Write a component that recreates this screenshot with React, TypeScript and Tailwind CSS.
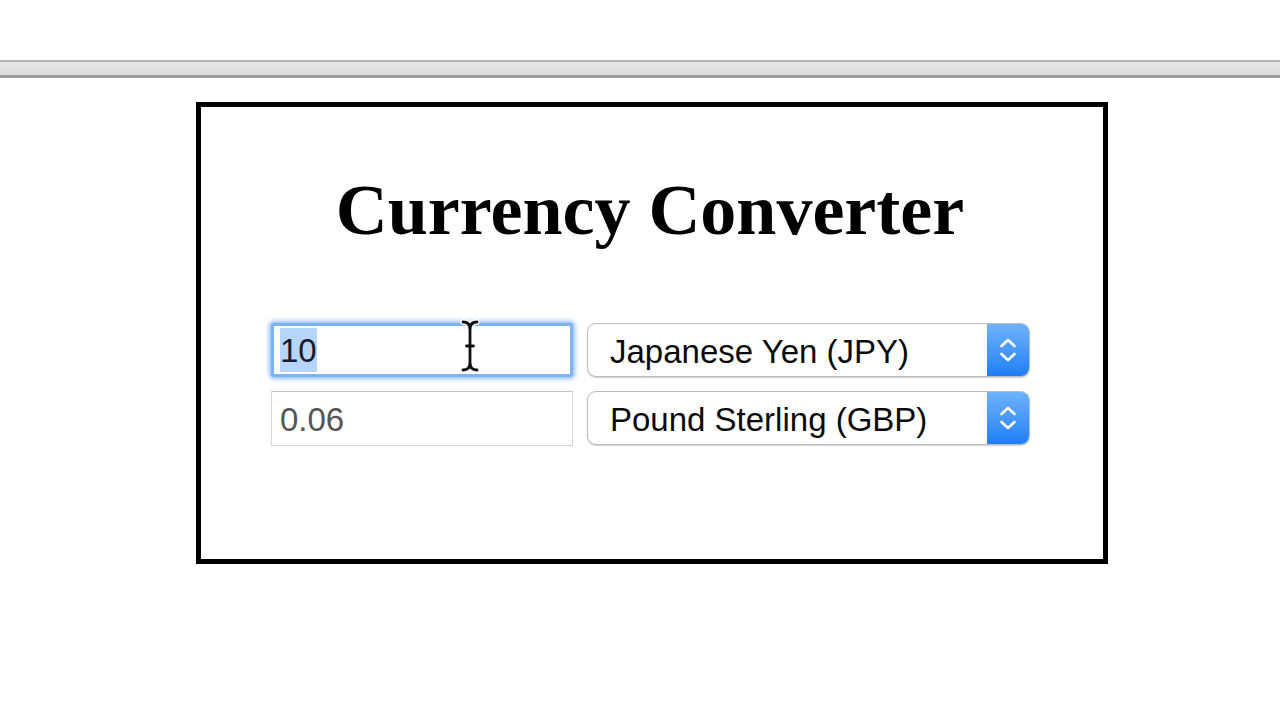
import React from "react";

function Chevrons() {
  return (
    <svg width="18" height="30" viewBox="0 0 18 30" fill="none">
      <path d="M2.5 11 L9 5 L15.5 11" stroke="white" strokeWidth="2.6" strokeLinecap="round" strokeLinejoin="round" />
      <path d="M2.5 19 L9 25 L15.5 19" stroke="white" strokeWidth="2.6" strokeLinecap="round" strokeLinejoin="round" />
    </svg>
  );
}

function Select({ label }: { label: string }) {
  return (
    <div className="flex h-[54px] w-[443px] items-stretch rounded-[9px] border border-[#bcbcbc] bg-white shadow-[0_1px_1px_rgba(0,0,0,0.18)] overflow-hidden">
      <div className="flex flex-1 items-center pl-[22px] pt-[2px] text-[33px] text-[#0a0a0a] leading-none" style={{ fontFamily: '"Liberation Sans", Arial, sans-serif' }}>
        {label}
      </div>
      <div className="flex w-[42px] items-center justify-center bg-gradient-to-b from-[#6db2fb] to-[#1b7ff5]">
        <Chevrons />
      </div>
    </div>
  );
}

function IBeam() {
  const paths = (
    <>
      <path d="M3 3 Q10 3 10 10 Q10 3 17 3" />
      <path d="M10 10 V44" />
      <path d="M3 51 Q10 51 10 44 Q10 51 17 51" />
      <path d="M6.5 27 H13.5" />
    </>
  );
  return (
    <svg width="20" height="54" viewBox="0 0 20 54" fill="none" className="absolute left-[460px] top-[319px]">
      <g stroke="white" strokeWidth="5.5" strokeLinecap="round">{paths}</g>
      <g stroke="#111" strokeWidth="2.8" strokeLinecap="round">{paths}</g>
    </svg>
  );
}

export default function App() {
  return (
    <div className="relative min-h-[720px] w-[1280px] bg-white" style={{ fontFamily: '"Liberation Sans", Arial, sans-serif' }}>
      <div className="h-[60px]" />
      <div className="h-[18px] border-t-[2px] border-b-[3px] border-t-[#b4b4b4] border-b-[#9c9c9c] bg-gradient-to-b from-[#e6e6e6] to-[#dcdcdc]" />
      <div className="h-[24px]" />
      <div className="ml-[196px] h-[462px] w-[912px] border-[5px] border-black bg-white">
        <h1
          className="pt-[63px] pr-[4px] text-center text-[72px] font-bold leading-[80px] text-black"
          style={{ fontFamily: '"Liberation Serif", "Times New Roman", serif' }}
        >
          Currency Converter
        </h1>
        <div className="mt-[73px] ml-[70px] grid grid-cols-[302px_443px] gap-x-[14px] gap-y-[14px]">
          <div className="flex h-[54px] items-center rounded-[3px] border-[3px] border-[#7db2f2] bg-white pl-[6px] shadow-[0_0_4px_2px_rgba(110,165,240,0.75)]">
            <span className="bg-[#b5d5fb] pt-[2px] text-[33px] leading-[42px] text-[#1a1a2a]">10</span>
          </div>
          <Select label="Japanese Yen (JPY)" />
          <div className="flex h-[55px] items-center border border-[#d6d6d6] border-t-[#c2c2c2] bg-white pl-[8px] pt-[2px]">
            <span className="text-[33px] leading-none text-[#555]">0.06</span>
          </div>
          <Select label="Pound Sterling (GBP)" />
        </div>
      </div>
      <IBeam />
    </div>
  );
}
